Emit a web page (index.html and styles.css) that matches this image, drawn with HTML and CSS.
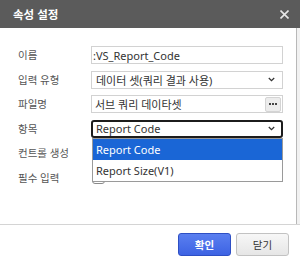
FILE: index.html
```html
<!DOCTYPE html>
<html lang="ko">
<head>
    <meta charset="UTF-8">
    <title>속성 설정</title>
    <link rel="stylesheet" href="styles.css">
</head>
<body>
    <div class="dialog">
        <div class="titlebar">
            <span class="title">속성 설정</span>
            <svg class="close" width="9" height="9" viewBox="0 0 9 9">
                <path d="M0.5 0.5 L8.5 8.5 M8.5 0.5 L0.5 8.5" stroke="#e6e6e6" stroke-width="1.6"/>
            </svg>
        </div>

        <div class="body">
            <div class="form">
                <label class="label">이름</label>
                <div class="field field-text">:VS_Report_Code</div>

                <label class="label">입력 유형</label>
                <div class="field field-select">
                    <span>데이터 셋(쿼리 결과 사용)</span>
                    <svg class="arrow" width="7" height="5" viewBox="0 0 7 5"><path d="M0.8 1 L3.5 3.6 L6.2 1" fill="none" stroke="#333" stroke-width="1.3"/></svg>
                </div>

                <label class="label">파일명</label>
                <div class="field field-browse">
                    <span>서브 쿼리 데이타셋</span>
                    <span class="dots-btn">
                        <svg width="8" height="2" viewBox="0 0 8 2"><rect x="0" y="0" width="2" height="2" fill="#444"/><rect x="3" y="0" width="2" height="2" fill="#444"/><rect x="6" y="0" width="2" height="2" fill="#444"/></svg>
                    </span>
                </div>

                <label class="label">항목</label>
                <div class="select-wrap">
                    <div class="field field-select focused">
                        <span>Report Code</span>
                        <svg class="arrow" width="7" height="5" viewBox="0 0 7 5"><path d="M0.8 1 L3.5 3.6 L6.2 1" fill="none" stroke="#333" stroke-width="1.3"/></svg>
                    </div>
                    <ul class="options">
                        <li class="option selected">Report Code</li>
                        <li class="option">Report Size(V1)</li>
                    </ul>
                </div>

                <label class="label">컨트롤 생성</label>
                <div class="check-cell"><span class="checkbox"></span></div>

                <label class="label">필수 입력</label>
                <div class="check-cell"><span class="checkbox"></span></div>
            </div>
            <div class="gutter"></div>
        </div>

        <div class="footer">
            <button class="btn btn-primary">확인</button>
            <button class="btn btn-default">닫기</button>
        </div>
    </div>
</body>
</html>
```

FILE: styles.css
```css
* {
    margin: 0;
    padding: 0;
    box-sizing: border-box;
    font-family: 'Noto Sans', 'Noto Sans CJK KR', sans-serif;
}

body {
    background: #ffffff;
    width: 300px;
    height: 262px;
    overflow: hidden;
}

.dialog {
    width: 300px;
    height: 262px;
    display: flex;
    flex-direction: column;
}

.titlebar {
    height: 28px;
    background: #5b5b5b;
    display: flex;
    align-items: center;
    justify-content: space-between;
    padding: 0 11px 0 13px;
}

.title {
    color: #ffffff;
    font-size: 11.5px;
    font-weight: 700;
}

.close {
    display: block;
}

.body {
    height: 196px;
    display: flex;
}

.form {
    width: 297px;
    border-right: 1px solid #b8b8b8;
    padding: 18px 13px 0 18px;
    display: grid;
    grid-template-columns: 73px 192px;
    grid-auto-rows: 18px;
    row-gap: 6.5px;
    align-items: center;
}

.gutter {
    flex: 1;
    background: #f1f1f1;
}

.label {
    font-size: 10.5px;
    color: #555555;
    line-height: 18px;
}

.field {
    height: 18px;
    border: 1px solid #d2d2d2;
    background: #ffffff;
    font-size: 11px;
    color: #333333;
    display: flex;
    align-items: center;
    padding: 0 4px;
    white-space: nowrap;
}

.field-text {
    padding-left: 1px;
}

.field-select {
    justify-content: space-between;
    padding-right: 7px;
}

.field-browse {
    justify-content: space-between;
    padding-right: 0;
    padding-left: 3px;
}

.dots-btn {
    width: 16px;
    height: 15px;
    margin-right: 1px;
    background: #ececec;
    border: 1px solid #d4d4d4;
    border-radius: 2px;
    display: flex;
    align-items: center;
    justify-content: center;
}

.dots-btn svg {
    display: block;
}

.select-wrap {
    position: relative;
    height: 18px;
    z-index: 2;
}

.focused {
    border: 2px solid #1c1c1c;
    border-radius: 3px;
    padding-left: 3px;
    padding-right: 6px;
}

.options {
    position: absolute;
    left: 1px;
    right: 0;
    top: 18px;
    list-style: none;
    border: 1px solid #9a9a9a;
    background: #ffffff;
}

.option {
    height: 21px;
    line-height: 21px;
    padding-left: 3px;
    font-size: 11px;
    color: #333333;
}

.option.selected {
    background: #1a66d6;
    color: #ffffff;
}

.check-cell {
    display: flex;
    align-items: center;
    padding-left: 1px;
}

.checkbox {
    width: 13px;
    height: 13px;
    border: 1px solid #8a8a8a;
    border-radius: 3px;
    background: #ffffff;
}

.footer {
    flex: 1;
    border-top: 1px solid #d4d4d4;
    display: flex;
    justify-content: flex-end;
    align-items: flex-start;
    gap: 5px;
    padding: 8px 11px 0 0;
    background: #ffffff;
}

.btn {
    width: 53px;
    height: 23px;
    border-radius: 3px;
    font-size: 10.5px;
    cursor: pointer;
}

.btn-primary {
    background: linear-gradient(#5a7ff0, #3d63e3);
    border: 1px solid #2e4fc4;
    color: #ffffff;
    font-weight: 700;
}

.btn-default {
    background: linear-gradient(#f7f7f7, #e6e6e6);
    border: 1px solid #c2c2c2;
    color: #333333;
}
```
